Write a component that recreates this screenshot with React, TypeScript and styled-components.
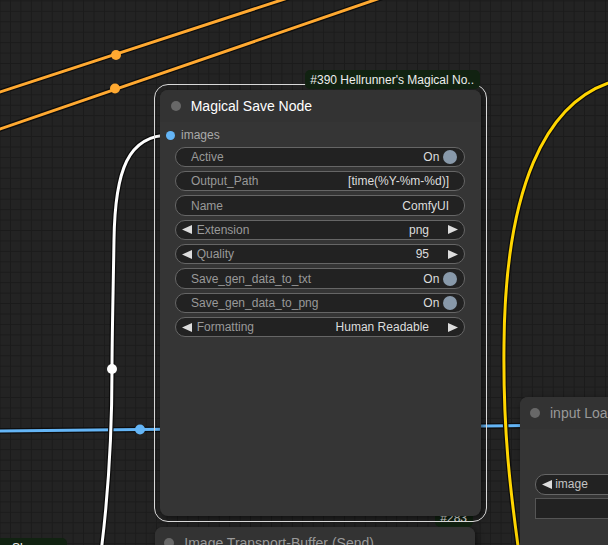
import React from "react";
import styled, { createGlobalStyle, css } from "styled-components";

const Global = createGlobalStyle`
  html, body { margin: 0; padding: 0; background: #222; overflow: hidden; }
  body { font-family: "Liberation Sans", Arial, sans-serif; }
  #root { width: 608px; height: 545px; }
`;

const Canvas = styled.div`
  position: relative;
  width: 608px;
  height: 545px;
  overflow: hidden;
  background-color: #232323;
  background-image:
    linear-gradient(to right, #1b1b1b 1px, transparent 1px),
    linear-gradient(to bottom, #1b1b1b 1px, transparent 1px);
  background-size: 10.45px 10.45px;
  background-position: -0.45px 0.4px;
  font-family: "Liberation Sans", Arial, sans-serif;
`;

const WireLayer = styled.svg`
  position: absolute;
  left: 0;
  top: 0;
  width: 608px;
  height: 545px;
`;

const NodeBox = styled.div<{ $x: number; $y: number; $w: number; $h: number; $selected?: boolean }>`
  position: absolute;
  left: ${(p) => p.$x}px;
  top: ${(p) => p.$y}px;
  width: ${(p) => p.$w}px;
  height: ${(p) => p.$h}px;
  background: #353535;
  border-radius: 8px;
  display: flex;
  flex-direction: column;
  box-shadow: 2px 2px 6px rgba(0, 0, 0, 0.55);
  ${(p) =>
    p.$selected &&
    css`
      &::before {
        content: "";
        position: absolute;
        left: -6px;
        top: -6px;
        right: -6px;
        bottom: -6px;
        border: 1px solid #d8d8d8;
        border-radius: 14px;
        pointer-events: none;
      }
    `}
`;

const TitleBar = styled.div<{ $pad: number }>`
  height: 31.7px;
  flex: none;
  display: flex;
  align-items: center;
  gap: 10px;
  padding-left: ${(p) => p.$pad}px;
  background: #333;
  border-radius: 8px 8px 0 0;
  white-space: nowrap;
  overflow: hidden;
`;

const TitleDot = styled.span`
  width: 10px;
  height: 10px;
  border-radius: 50%;
  background: #686868;
  flex: none;
`;

const TitleText = styled.span<{ $selected?: boolean }>`
  font-size: 14px;
  color: ${(p) => (p.$selected ? "#ffffff" : "#999999")};
`;

const Badge = styled.div<{ $right: number; $top: number }>`
  position: absolute;
  right: ${(p) => p.$right}px;
  top: ${(p) => p.$top}px;
  height: 19px;
  padding: 0 6px 0 5px;
  display: flex;
  align-items: center;
  background: #112211;
  border-radius: 5px;
  color: #eeeeee;
  font-size: 12px;
  white-space: nowrap;
`;

const CornerBadge = styled.div`
  position: absolute;
  left: -4px;
  top: 538px;
  width: 55px;
  height: 19px;
  padding-left: 16px;
  display: flex;
  align-items: center;
  background: #112211;
  border-radius: 5px;
  color: #eeeeee;
  font-size: 12px;
  white-space: nowrap;
`;

const SlotRow = styled.div`
  height: 25px;
  flex: none;
  display: flex;
  align-items: center;
  gap: 6px;
  padding: 2px 0 0 6px;
  box-sizing: border-box;
`;

const SlotDot = styled.span<{ $color: string }>`
  width: 9px;
  height: 9px;
  border-radius: 50%;
  background: ${(p) => p.$color};
  flex: none;
`;

const SlotLabel = styled.span`
  font-size: 12px;
  color: #aaaaaa;
`;

const WidgetList = styled.div<{ $top?: number }>`
  display: flex;
  flex-direction: column;
  gap: 3.95px;
  padding: ${(p) => p.$top ?? 0}px 0 0 15px;
`;

type Kind = "toggle" | "text" | "combo";

const padLeft: Record<Kind, number> = { toggle: 15, text: 15, combo: 5.7 };
const padRight: Record<Kind, number> = { toggle: 7.3, text: 15, combo: 6 };

const Widget = styled.div<{ $kind: Kind }>`
  box-sizing: border-box;
  width: 290px;
  height: 20.4px;
  display: flex;
  align-items: center;
  background: #222;
  border: 1px solid #666;
  border-radius: 10px;
  padding: 0 ${(p) => padRight[p.$kind]}px 0 ${(p) => padLeft[p.$kind]}px;
  font-size: 12px;
  white-space: nowrap;
  overflow: hidden;
`;

const WLabel = styled.span<{ $bright?: boolean }>`
  color: ${(p) => (p.$bright ? "#c4c4c4" : "#999999")};
`;

const WValue = styled.span<{ $gapRight: number }>`
  margin-left: auto;
  margin-right: ${(p) => p.$gapRight}px;
  color: #dddddd;
`;

const Knob = styled.span`
  width: 14px;
  height: 14px;
  border-radius: 50%;
  background: #8899aa;
  flex: none;
`;

const ArrowSvg = styled.svg<{ $gap: number }>`
  flex: none;
  width: 10px;
  height: 9px;
  margin-right: ${(p) => p.$gap}px;
`;

const TextBox = styled.div`
  box-sizing: border-box;
  width: 290px;
  height: 20.4px;
  background: #222;
  border: 1px solid #555;
`;

const RightBody = styled.div`
  display: flex;
  flex-direction: column;
  gap: 3.6px;
  padding: 45.6px 0 0 15px;
`;

const LeftArrow = ({ gap }: { gap: number }) => (
  <ArrowSvg $gap={gap} viewBox="0 0 10 9">
    <polygon points="10,0 10,9 0,4.5" fill="#dddddd" />
  </ArrowSvg>
);

const RightArrow = () => (
  <ArrowSvg $gap={0} viewBox="0 0 10 9">
    <polygon points="0,0 0,9 10,4.5" fill="#dddddd" />
  </ArrowSvg>
);

type WidgetDef = { kind: Kind; label: string; value: string };

const widgets: WidgetDef[] = [
  { kind: "toggle", label: "Active", value: "On" },
  { kind: "text", label: "Output_Path", value: "[time(%Y-%m-%d)]" },
  { kind: "text", label: "Name", value: "ComfyUI" },
  { kind: "combo", label: "Extension", value: "png" },
  { kind: "combo", label: "Quality", value: "95" },
  { kind: "toggle", label: "Save_gen_data_to_txt", value: "On" },
  { kind: "toggle", label: "Save_gen_data_to_png", value: "On" },
  { kind: "combo", label: "Formatting", value: "Human Readable" },
];

const NodeWidget = ({ w }: { w: WidgetDef }) => (
  <Widget $kind={w.kind}>
    {w.kind === "combo" && <LeftArrow gap={5} />}
    <WLabel>{w.label}</WLabel>
    <WValue $gapRight={w.kind === "combo" ? 19 : w.kind === "toggle" ? 3.4 : 0}>{w.value}</WValue>
    {w.kind === "toggle" && <Knob />}
    {w.kind === "combo" && <RightArrow />}
  </Widget>
);

const Wire = ({ d, color }: { d: string; color: string }) => (
  <g fill="none" strokeLinecap="round">
    <path d={d} stroke="#0d0d0d" strokeWidth={5.5} />
    <path d={d} stroke={color} strokeWidth={3} />
  </g>
);

const Dot = ({ x, y, color }: { x: number; y: number; color: string }) => (
  <circle cx={x} cy={y} r={5} fill={color} />
);

export default function App() {
  return (
    <>
      <Global />
      <Canvas>
        <WireLayer viewBox="0 0 608 545">
          <Wire d="M -5 93.6 L 300 -6" color="#ffa931" />
          <Dot x={116} y={55} color="#ffa931" />
          <Wire d="M -5 130.7 L 392 -6" color="#ffa931" />
          <Dot x={115} y={88.5} color="#ffa931" />
          <Wire d="M -5 431 L 525 425.5" color="#64b5f6" />
          <Dot x={140} y={429.5} color="#64b5f6" />
          <Wire
            d="M 170 135 C 128 135, 115 170, 114 240 C 113 300, 112 340, 112 369 C 112 440, 108 500, 100 560"
            color="#ffffff"
          />
          <Dot x={112} y={369} color="#ffffff" />
          <Wire
            d="M 628 78 C 540 92, 505 200, 504 345 C 503 430, 510 490, 520 560"
            color="#ffd500"
          />
        </WireLayer>

        <CornerBadge>Show</CornerBadge>

        <NodeBox $x={520} $y={397} $w={300} $h={200}>
          <TitleBar $pad={10}>
            <TitleDot />
            <TitleText>input Load Image</TitleText>
          </TitleBar>
          <RightBody>
            <Widget $kind="combo">
              <LeftArrow gap={3.5} />
              <WLabel $bright>image</WLabel>
            </Widget>
            <TextBox />
          </RightBody>
        </NodeBox>

        <NodeBox $x={155} $y={527} $w={320} $h={120}>
          <Badge $right={2} $top={-19}>#283</Badge>
          <TitleBar $pad={9.3}>
            <TitleDot />
            <TitleText>Image Transport-Buffer (Send)</TitleText>
          </TitleBar>
        </NodeBox>

        <NodeBox $x={160} $y={90} $w={321} $h={425.5} $selected>
          <Badge $right={1} $top={-20}>#390 Hellrunner's Magical No..</Badge>
          <TitleBar $pad={10.7}>
            <TitleDot />
            <TitleText $selected>Magical Save Node</TitleText>
          </TitleBar>
          <SlotRow>
            <SlotDot $color="#64b5f6" />
            <SlotLabel>images</SlotLabel>
          </SlotRow>
          <WidgetList>
            {widgets.map((w) => (
              <NodeWidget key={w.label} w={w} />
            ))}
          </WidgetList>
        </NodeBox>
      </Canvas>
    </>
  );
}
